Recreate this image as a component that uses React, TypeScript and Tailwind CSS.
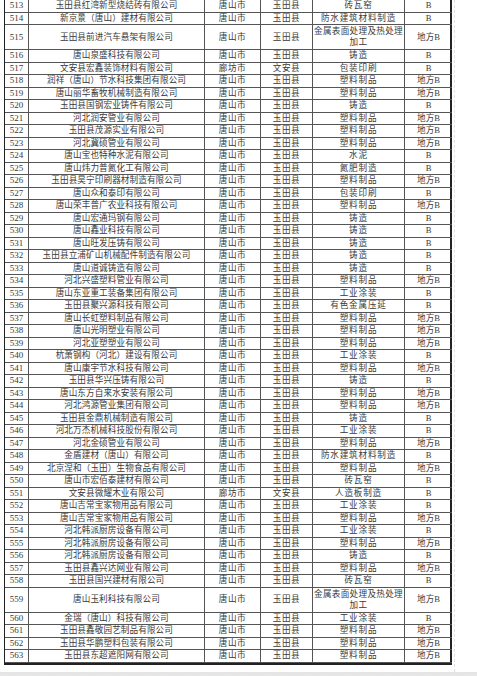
import React from 'react';

type Row = [number, string, string, string, string, string];

const rows: Row[] = [
  [513, '玉田县红湾新型烧结砖有限公司', '唐山市', '玉田县', '砖瓦窑', 'B'],
  [514, '新京景（唐山）建材有限公司', '唐山市', '玉田县', '防水建筑材料制造', 'B'],
  [515, '玉田县前进汽车悬架有限公司', '唐山市', '玉田县', '金属表面处理及热处理加工', '地方B'],
  [516, '唐山泉盛科技有限公司', '唐山市', '玉田县', '铸造', 'B'],
  [517, '文安县宏鑫装饰材料有限公司', '廊坊市', '文安县', '包装印刷', 'B'],
  [518, '润祥（唐山）节水科技集团有限公司', '唐山市', '玉田县', '塑料制品', '地方B'],
  [519, '唐山丽华畜牧机械制造有限公司', '唐山市', '玉田县', '塑料制品', '地方B'],
  [520, '玉田县国钢宏业铸件有限公司', '唐山市', '玉田县', '铸造', 'B'],
  [521, '河北润安管业有限公司', '唐山市', '玉田县', '塑料制品', '地方B'],
  [522, '玉田县茂源实业有限公司', '唐山市', '玉田县', '塑料制品', '地方B'],
  [523, '河北冀硕管业有限公司', '唐山市', '玉田县', '塑料制品', '地方B'],
  [524, '唐山宝也特种水泥有限公司', '唐山市', '玉田县', '水泥', 'B'],
  [525, '唐山炜力普氮化工有限公司', '唐山市', '玉田县', '氮肥制造', 'B'],
  [526, '玉田县昊宁印刷器材制造有限公司', '唐山市', '玉田县', '塑料制品', '地方B'],
  [527, '唐山众和泰印有限公司', '唐山市', '玉田县', '包装印刷', 'B'],
  [528, '唐山荣丰普广农业科技有限公司', '唐山市', '玉田县', '塑料制品', '地方B'],
  [529, '唐山宏通玛钢有限公司', '唐山市', '玉田县', '铸造', 'B'],
  [530, '唐山鑫业科技有限公司', '唐山市', '玉田县', '铸造', 'B'],
  [531, '唐山旺发压铸有限公司', '唐山市', '玉田县', '铸造', 'B'],
  [532, '玉田县立浦矿山机械配件制造有限公司', '唐山市', '玉田县', '铸造', 'B'],
  [533, '唐山道诚铸造有限公司', '唐山市', '玉田县', '铸造', 'B'],
  [534, '河北兴盛塑料管业有限公司', '唐山市', '玉田县', '塑料制品', '地方B'],
  [535, '唐山东亚重工装备集团有限公司', '唐山市', '玉田县', '工业涂装', 'B'],
  [536, '玉田县聚兴源科技有限公司', '唐山市', '玉田县', '有色金属压延', 'B'],
  [537, '唐山长虹塑料制品有限公司', '唐山市', '玉田县', '塑料制品', '地方B'],
  [538, '唐山光明塑业有限公司', '唐山市', '玉田县', '塑料制品', '地方B'],
  [539, '河北亚塑塑业有限公司', '唐山市', '玉田县', '塑料制品', '地方B'],
  [540, '杭萧钢构（河北）建设有限公司', '唐山市', '玉田县', '工业涂装', 'B'],
  [541, '唐山康宇节水科技有限公司', '唐山市', '玉田县', '塑料制品', '地方B'],
  [542, '玉田县华兴压铸有限公司', '唐山市', '玉田县', '铸造', 'B'],
  [543, '唐山东方自来水安装有限公司', '唐山市', '玉田县', '塑料制品', '地方B'],
  [544, '河北鸿源管业集团有限公司', '唐山市', '玉田县', '塑料制品', '地方B'],
  [545, '玉田县金鼎机械制造有限公司', '唐山市', '玉田县', '铸造', 'B'],
  [546, '河北万杰机械科技股份有限公司', '唐山市', '玉田县', '工业涂装', 'B'],
  [547, '河北金硕管业有限公司', '唐山市', '玉田县', '塑料制品', '地方B'],
  [548, '金盾建材（唐山）有限公司', '唐山市', '玉田县', '防水建筑材料制造', 'B'],
  [549, '北京涅和（玉田）生物食品有限公司', '唐山市', '玉田县', '塑料制品', '地方B'],
  [550, '唐山市宏佰泰建材有限公司', '唐山市', '玉田县', '砖瓦窑', 'B'],
  [551, '文安县微耀木业有限公司', '廊坊市', '文安县', '人造板制造', 'B'],
  [552, '唐山吉常宝家物用品有限公司', '唐山市', '玉田县', '工业涂装', 'B'],
  [553, '唐山吉常宝家物用品有限公司', '唐山市', '玉田县', '塑料制品', '地方B'],
  [554, '河北韩派厨房设备有限公司', '唐山市', '玉田县', '工业涂装', 'B'],
  [555, '河北韩派厨房设备有限公司', '唐山市', '玉田县', '塑料制品', '地方B'],
  [556, '河北韩派厨房设备有限公司', '唐山市', '玉田县', '铸造', 'B'],
  [557, '玉田县鑫兴达网业有限公司', '唐山市', '玉田县', '塑料制品', '地方B'],
  [558, '玉田县国兴建材有限公司', '唐山市', '玉田县', '砖瓦窑', 'B'],
  [559, '唐山玉利科技有限公司', '唐山市', '玉田县', '金属表面处理及热处理加工', '地方B'],
  [560, '金瑞（唐山）科技有限公司', '唐山市', '玉田县', '工业涂装', 'B'],
  [561, '玉田县鑫敬园艺制品有限公司', '唐山市', '玉田县', '塑料制品', '地方B'],
  [562, '玉田县华鹏塑料包装有限公司', '唐山市', '玉田县', '塑料制品', '地方B'],
  [563, '玉田县东超遮阳网有限公司', '唐山市', '玉田县', '塑料制品', '地方B'],
];

const cell = 'flex items-center justify-center text-center border-r border-b border-[#555] overflow-hidden whitespace-nowrap';

function TableRow({ row }: { row: Row }) {
  const [no, name, city, county, industry, level] = row;
  const tall = industry.length > 10;
  return (
    <div className={`grid grid-cols-[24px_176px_56px_52px_92px_47px] ${tall ? 'h-[25px]' : 'h-[12.5px]'}`}>
      <div className={`${cell} text-[9px]`}>{no}</div>
      <div className={`${cell} tracking-[0.1px]`}>{name}</div>
      <div className={`${cell} tracking-[0.6px]`}>{city}</div>
      <div className={`${cell} tracking-[0.6px]`}>{county}</div>
      <div className={`${cell} ${tall ? 'whitespace-normal leading-[11px] tracking-[0.3px] px-[1px]' : 'tracking-[0.8px]'}`}>
        {tall ? (
          <span>
            {industry.slice(0, 10)}
            <br />
            {industry.slice(10)}
          </span>
        ) : (
          industry
        )}
      </div>
      <div className={`${cell} border-r-0`}>{level}</div>
    </div>
  );
}

export default function App() {
  return (
    <div className="w-[477px] h-[676px] bg-white overflow-hidden [font-family:'Liberation_Serif','Noto_Sans_CJK_SC',serif] text-[#3a3a3a] text-[8.6px] leading-none">
      <div className="flex h-[672px]">
        <div className="w-[455px] h-full border-r border-dashed border-[#e3e3e3] pl-[4px]">
          <div className="w-[448px] border-l-[1.5px] border-r-2 border-b-2 border-[#222]">
            {rows.map((r) => (
              <TableRow key={r[0]} row={r} />
            ))}
          </div>
        </div>
      </div>
      <div className="h-[4px] border-t border-dashed border-[#e3e3e3] bg-[#e6e6e6]" />
    </div>
  );
}
